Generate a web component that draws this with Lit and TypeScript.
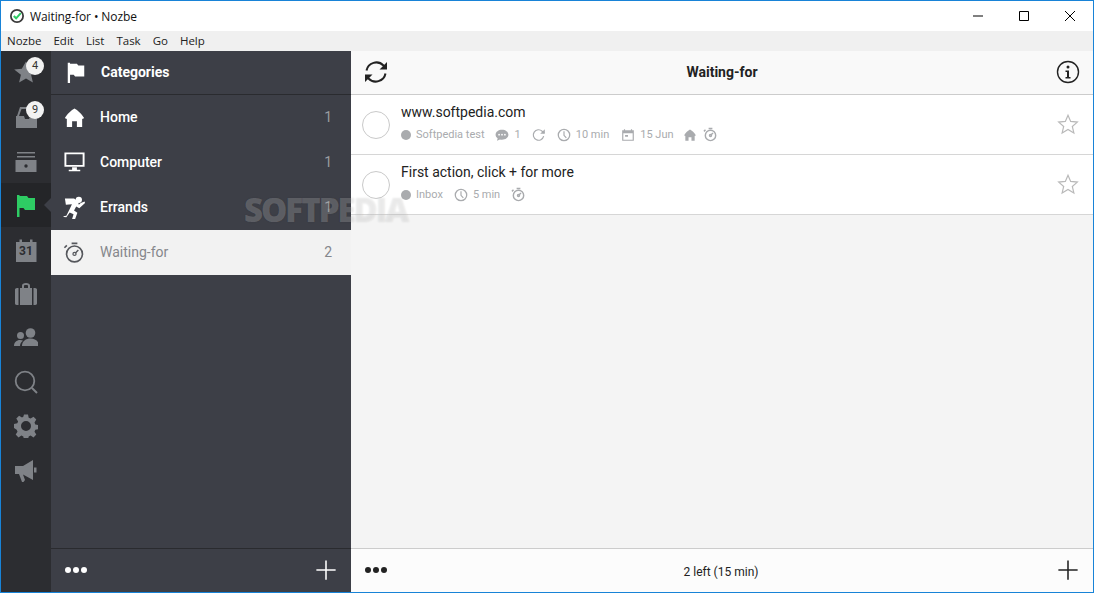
import { LitElement, html, css, svg } from "lit";
import { customElement } from "lit/decorators.js";

const icons: Record<string, any> = {
  star: svg`<path d="M12 1.500l3.200 7.200 7.800.8-5.900 5.200 1.800 7.800-6.900-4-6.900 4 1.800-7.800L.2 9.500l7.600-.8z" fill="currentColor"/>`,
  inbox: svg`<path fill-rule="evenodd" d="M6 3h15v9h2v12H2V12h1zM7.500 5 5 12h5l1 3h4l1-3h3V5z" fill="currentColor"/>`,
  box: svg`<path d="M3 4h18v1.600H3zM3 8h18v1.600H3zM1.500 12h21v12h-21z" fill="currentColor"/><circle cx="12" cy="18" r="1.700" fill="#2c2d31"/>`,
  flag: svg`<path d="M3 2h2.500v22H3zM5.500 3H13l1.500 2H21v12H11l-1.500-2h-4z" fill="currentColor"/>`,
  cal: svg`<path d="M5.500 1.500h2.500v2.500h8V1.500h2.500v2.500H22.500v20H2V4h3.500z" fill="currentColor"/>`,
  bag: svg`<path fill-rule="evenodd" d="M8 6V3.500C8 2 9.500 1 12 1s4 1 4 2.500V6h2v17H6V6zM10 6h4V3.500c-1-.6-3-.6-4 0zM1 7.500C1 6.500 2 6 4.500 6v17C2 23 1 22.500 1 21.500zM19.500 6C22 6 23 6.500 23 7.500v14c0 1-1 1.500-3.500 1.500z" fill="currentColor"/>`,
  people: svg`<circle cx="16.500" cy="7" r="4.800" fill="currentColor"/><circle cx="6.500" cy="9.500" r="3.500" fill="currentColor"/><path d="M8 20c0-5 4-7.500 8.500-7.500S25 15 25 20zM0 20c0-3.500 2.500-6 6-6 1.300 0 2.300.3 3 .8-1.800 1.300-3 3-3 5.200z" fill="currentColor"/>`,
  search: svg`<circle cx="11" cy="11" r="9.300" fill="none" stroke="currentColor" stroke-width="1.800"/><path d="M18 18l5 5" stroke="currentColor" stroke-width="2" fill="none"/>`,
  gear: svg`<path fill-rule="evenodd" d="M10 .5h4l.7 3.300 1.900.8 2.900-1.800 2.800 2.800-1.800 2.900.8 1.900 3.200.7v4l-3.200.7-.8 1.900 1.800 2.900-2.800 2.800-2.900-1.800-1.900.8-.7 3.300h-4l-.7-3.300-1.900-.8-2.900 1.800-2.800-2.800 1.800-2.900-.8-1.900L0 14v-4l3.300-.7.800-1.900-1.800-2.900 2.800-2.800L8 3.400l1.300-.6zM12 7a5 5 0 1 0 0 10 5 5 0 0 0 0-10z" fill="currentColor"/>`,
  mega: svg`<path d="M1 8h8l10-6v20L9 16.500l2 5.500-1.500 2H8L5 16H1zM20 9.500h2.500v5H20z" fill="currentColor"/>`,
  home: svg`<path d="M12 2.500C9 4 4 8.500 2 12.500l1.500 1 .5-.4V22h5.500v-6h5v6H20v-8.900l.5.4 1.500-1c-2-4-7-8.500-10-10z" fill="currentColor"/>`,
  monitor: svg`<path fill-rule="evenodd" d="M1.500 1.500h21v15h-21zM3.500 3.500v11h17v-11zM9.500 17h5v2.500h3.500V21H6v-1.500h3.500z" fill="currentColor"/>`,
  run: svg`<circle cx="16.500" cy="4" r="3.300" fill="currentColor"/><path d="M2 2.500h9.500l4 2.800 1 3.700 2-1.800 4-1.500.5 1.500-6 5.500-3.200-1.700-2.300 4 3.500 2.500-2.500 7-3-.6 1.500-4.800-4-2-3.500 5L1 22l-.8-1 3.300-.5 3.500-7 2.300-5L3 9z" fill="currentColor"/>`,
  timer: svg`<circle cx="12" cy="13.500" r="8.300" fill="none" stroke="currentColor" stroke-width="1.700"/><path d="M9 2.500h6M4 4.500 1.500 7" stroke="currentColor" stroke-width="1.700" fill="none"/><circle cx="12" cy="13.500" r="1.600" fill="none" stroke="currentColor" stroke-width="1.300"/><path d="M13 12.500l3-3" stroke="currentColor" stroke-width="1.500"/>`,
  clock: svg`<circle cx="12" cy="12" r="9.800" fill="none" stroke="currentColor" stroke-width="2.200"/><path d="M12 5.500V12.500l4 4.500" fill="none" stroke="currentColor" stroke-width="2"/>`,
  bubble: svg`<path fill-rule="evenodd" d="M12 3c6 0 11 3.500 11 8.500S18 20 12 20c-1.300 0-2.500-.2-3.500-.5L3.500 22l1-4.300C2.300 16 1 14 1 11.500 1 6.500 6 3 12 3zM7 10a1.500 1.500 0 1 0 0 3 1.500 1.500 0 0 0 0-3zm5 0a1.500 1.500 0 1 0 0 3 1.500 1.500 0 0 0 0-3zm5 0a1.500 1.500 0 1 0 0 3 1.500 1.500 0 0 0 0-3z" fill="currentColor"/>`,
  repeat: svg`<path d="M20 14a9 9 0 1 1-2.500-8.500L21 8.500" fill="none" stroke="currentColor" stroke-width="2"/><path d="M22 2v8h-8z" fill="currentColor"/>`,
  date: svg`<path fill-rule="evenodd" d="M5 2h2v2h10V2h2v2h3v18H2V4h3zM4 9v11h16V9zM7 12h5v3H7z" fill="currentColor"/>`,
  sync: svg`<path d="M2.500 10.500A10 10 0 0 1 19.500 5.500L21 7.500M21.500 13.500A10 10 0 0 1 4.500 18.500L3 16.500" fill="none" stroke="currentColor" stroke-width="2"/><path d="M23 2v7.500h-7.500zM1 22v-7.500h7.500z" fill="currentColor"/>`,
  info: svg`<circle cx="12" cy="12" r="10.500" fill="none" stroke="currentColor" stroke-width="1.400"/><circle cx="12" cy="7" r="1.500" fill="currentColor"/><path d="M9.500 10.500H13V17h1.500v1.500h-5V17H11v-5H9.500z" fill="currentColor"/>`,
  ostar: svg`<path d="M12 2.500l2.900 6.700 7.300.7-5.500 4.800 1.700 7.100L12 18l-6.400 3.800 1.700-7.100-5.500-4.800 7.300-.7z" fill="none" stroke="currentColor" stroke-width="1.300"/>`,
  plus: svg`<path d="M12 1.500v21M1.500 12h21" stroke="currentColor" stroke-width="1.700" fill="none"/>`,
};

const icon = (n: string, s: number, cls = "") =>
  html`<svg class=${cls} width=${s} height=${s} viewBox="0 0 24 24">${icons[n]}</svg>`;

const rail: [string, string?][] = [
  ["star", "4"], ["inbox", "9"], ["box"], ["flag"], ["cal"], ["bag"], ["people"], ["search"], ["gear"], ["mega"],
];
const cats = [
  ["home", "Home", "1"], ["monitor", "Computer", "1"], ["run", "Errands", "1"], ["timer", "Waiting-for", "2"],
];

@customElement("app-root")
export class AppRoot extends LitElement {
  static styles = css`
    :host { display: block; width: 1094px; height: 593px; box-sizing: border-box; border: 1px solid #1883d7; position: relative; overflow: hidden; font-family: Roboto, sans-serif; background: #fff; }
    .title { height: 30px; display: flex; align-items: center; background: #fff; font: 12px "Open Sans", sans-serif; color: #111; }
    .logo { margin: 0 6px 0 9px; display: block; }
    .title .t { flex: 1; letter-spacing: -0.1px; }
    .wb { width: 46px; height: 30px; display: flex; align-items: center; justify-content: center; color: #000; }
    .menu { height: 20px; box-sizing: border-box; padding: 0 0 2px 6px; background: #f0f0f0; display: flex; align-items: center; gap: 12px; font: 11.5px "Open Sans", sans-serif; color: #222; }
    .body { height: 541px; display: flex; }
    .rail { width: 50px; background: #2c2d31; color: #7f8287; display: flex; flex-direction: column; }
    .ri { height: 44px; flex: none; box-sizing: border-box; display: flex; align-items: center; justify-content: center; position: relative; }
    .ri.before { padding-bottom: 2px; }
    .ri.after { padding-top: 2px; }
    .ri.on { background: #242528; color: #2ecc64; }
    .ri.on::after { content: ""; position: absolute; right: 0; top: 15px; border: 7px solid transparent; border-right-color: #3d3f47; border-left: 0; }
    .badge { position: absolute; left: 25px; top: 6px; width: 18px; height: 18px; border-radius: 50%; background: #f2f2f2; color: #333; font-size: 11px; line-height: 17px; text-align: center; }
    .calnum { position: absolute; left: 0; right: 0; top: 17px; text-align: center; font-size: 12px; font-weight: 700; line-height: 14px; color: #2c2d31; }
    .side { width: 300px; background: #3d3f47; color: #fff; display: flex; flex-direction: column; }
    .sh { height: 44px; box-sizing: border-box; padding: 0 0 1px 14px; border-bottom: 1px solid #2a2b2f; display: flex; align-items: center; gap: 14px; font-size: 14px; font-weight: 700; }
    .rows { flex: 1; }
    .cat { height: 45px; box-sizing: border-box; padding: 0 19px 1px 12px; display: flex; align-items: center; font-size: 14px; font-weight: 500; }
    .cat .lab { flex: 1; margin-left: 14px; }
    .cat .n { color: #9a9ca1; font-weight: 400; font-size: 14px; }
    .cat.on { background: #f2f2f2; color: #85878c; font-weight: 400; }
    .cat.on svg { color: #55575c; }
    .cat.on .n { color: #85878c; }
    .foot { height: 44px; flex: none; display: flex; align-items: center; justify-content: space-between; padding: 0 14px 1px; box-sizing: border-box; }
    .side .foot { border-top: 1px solid #2a2b2f; }
    .dots { display: flex; gap: 2px; }
    .dots i { width: 6px; height: 6px; border-radius: 50%; background: currentColor; }
    .main { flex: 1; display: flex; flex-direction: column; background: #f4f4f4; color: #222; }
    .mh { height: 44px; box-sizing: border-box; flex: none; background: #f9f9f9; border-bottom: 1px solid #ccc; display: flex; align-items: center; justify-content: space-between; padding: 0 13px 1px; font-size: 14px; }
    .mh b { font-weight: 700; }
    .list { flex: 1; }
    .task { height: 59px; background: #fff; border-bottom: 1px solid #d6d6d6; display: flex; align-items: center; padding: 0 14px 0 11px; }
    .check { width: 26px; height: 26px; border: 1px solid #c9c9c9; border-radius: 50%; flex: none; margin-top: 1px; }
    .tc { flex: 1; margin: -5px 0 0 11px; }
    .tt { font-size: 14px; line-height: 18px; color: #222; }
    .meta { display: flex; align-items: center; margin-top: 7px; height: 14px; font-size: 11px; color: #a9abae; }
    .meta svg { display: block; }
    .dot { width: 10px; height: 10px; border-radius: 50%; background: #a9abae; margin-right: 5px; }
    .star { color: #b9b9b9; margin-top: -1px; }
    .mf { height: 44px; flex: none; background: #fcfcfc; border-top: 1px solid #ccc; display: flex; align-items: center; justify-content: space-between; padding: 0 14px 1px; font-size: 12px; box-sizing: border-box; }
    .mf span { padding-top: 3px; margin-right: 2px; }
    .wm { position: absolute; left: 243px; top: 186px; font: 800 33px "Open Sans", sans-serif; letter-spacing: -2px; color: rgba(255, 255, 255, 0.2); text-shadow: 0 0 2px rgba(0, 0, 0, 0.1); pointer-events: none; white-space: nowrap; }
    .g5 { margin-right: 5px; }
    .g6 { margin-right: 6px; }
    .g9 { margin-right: 9px; }
    .g10 { margin-right: 10px; }
    .g11 { margin-right: 11px; }
    .g12 { margin-right: 12px; }
    .thick * { stroke-width: 2.3; }
  `;

  private railClass(i: number) {
    return i < 3 ? "before" : i === 3 ? "on" : "after";
  }

  render() {
    return html`
      <div class="title">
        <svg class="logo" width="14" height="14" viewBox="0 0 24 24"><circle cx="12" cy="12" r="10.5" fill="#fff" stroke="#3a3a3a" stroke-width="3"/><path d="M6.5 12l4 4 8-9" fill="none" stroke="#2ecc64" stroke-width="3.5"/></svg>
        <div class="t">Waiting-for • Nozbe</div>
        <div class="wb"><svg width="10" height="10" viewBox="0 0 10 10"><path d="M0 5h10" stroke="currentColor"/></svg></div>
        <div class="wb"><svg width="10" height="10" viewBox="0 0 10 10"><path d="M.5.5h9v9h-9z" fill="none" stroke="currentColor"/></svg></div>
        <div class="wb"><svg width="10" height="10" viewBox="0 0 10 10"><path d="M0 0l10 10M10 0 0 10" stroke="currentColor"/></svg></div>
      </div>
      <div class="menu"><span>Nozbe</span><span>Edit</span><span>List</span><span>Task</span><span>Go</span><span>Help</span></div>
      <div class="body">
        <div class="rail">
          ${rail.map(([n, b], i) => html`<div class="ri ${this.railClass(i)}">${icon(n, 24)}${b ? html`<div class="badge">${b}</div>` : ""}${n === "cal" ? html`<div class="calnum">31</div>` : ""}</div>`)}
        </div>
        <div class="side">
          <div class="sh">${icon("flag", 22)}<span>Categories</span></div>
          <div class="rows">
            ${cats.map(([i, l, n]) => html`<div class="cat ${l === "Waiting-for" ? "on" : ""}">${icon(i, 23)}<span class="lab">${l}</span><span class="n">${n}</span></div>`)}
          </div>
          <div class="foot"><div class="dots"><i></i><i></i><i></i></div>${icon("plus", 22)}</div>
        </div>
        <div class="main">
          <div class="mh">${icon("sync", 24)}<b>Waiting-for</b>${icon("info", 24)}</div>
          <div class="list">
            <div class="task">
              <div class="check"></div>
              <div class="tc">
                <div class="tt">www.softpedia.com</div>
                <div class="meta">
                  <i class="dot"></i><span class="g10">Softpedia test</span>
                  ${icon("bubble", 14, "g6")}<span class="g11">1</span>
                  ${icon("repeat", 14, "g11")}
                  ${icon("clock", 14, "g5")}<span class="g12">10 min</span>
                  ${icon("date", 14, "g5")}<span class="g9">15 Jun</span>
                  ${icon("home", 14, "g6")}${icon("timer", 15, "thick")}
                </div>
              </div>
              ${icon("ostar", 22, "star")}
            </div>
            <div class="task">
              <div class="check"></div>
              <div class="tc">
                <div class="tt">First action, click + for more</div>
                <div class="meta">
                  <i class="dot"></i><span class="g11">Inbox</span>
                  ${icon("clock", 14, "g5")}<span class="g11">5 min</span>
                  ${icon("timer", 15, "thick")}
                </div>
              </div>
              ${icon("ostar", 22, "star")}
            </div>
          </div>
          <div class="mf"><div class="dots"><i></i><i></i><i></i></div><span>2 left (15 min)</span>${icon("plus", 22)}</div>
        </div>
      </div>
      <div class="wm">SOFTPEDIA</div>
    `;
  }
}
